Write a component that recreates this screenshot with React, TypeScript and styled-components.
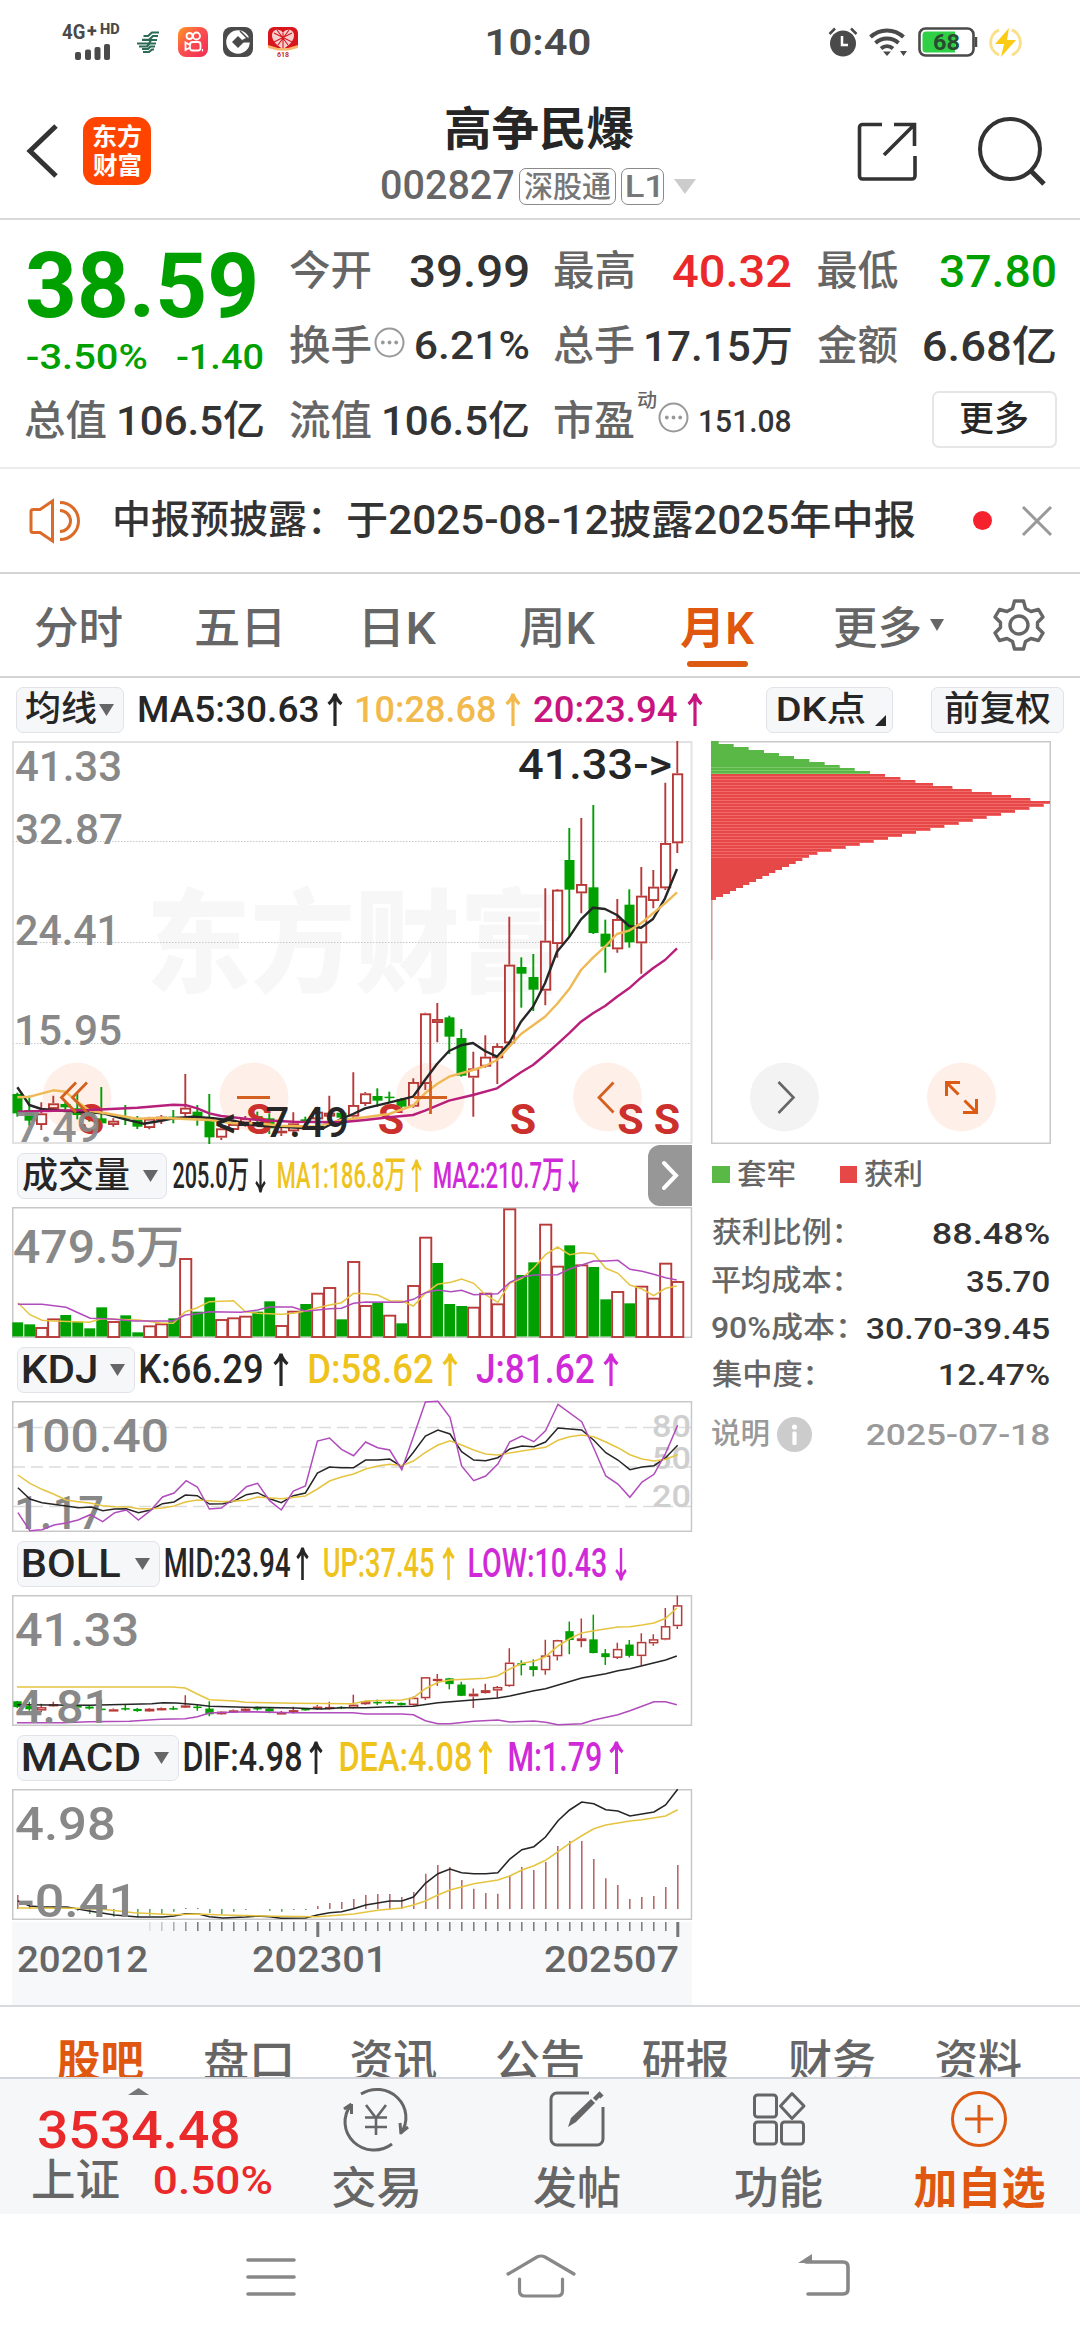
import React, { useLayoutEffect, useRef, useState } from 'react';
import styled, { createGlobalStyle } from 'styled-components';

const FONT = 'Roboto, "Noto Sans CJK SC", sans-serif';

const Global = createGlobalStyle`
  * { box-sizing: border-box; }
  body { margin: 0; background: #fff; font-family: ${FONT}; font-weight: 500; color: #333; }
  svg { display: block; flex: none; overflow: visible; }
`;

/* ---------- text fitted to the width of its slot ---------- */
const Slot = styled.span<{ $w: number; $s: number; $c?: string; $b?: number; $ml?: number }>`
  display: block;
  flex: none;
  width: ${p => p.$w}px;
  margin-left: ${p => p.$ml ?? 0}px;
  font-size: ${p => p.$s}px;
  line-height: ${p => Math.round(p.$s * 1.1)}px;
  height: ${p => Math.round(p.$s * 1.1)}px;
  font-weight: ${p => p.$b ?? 500};
  color: ${p => p.$c ?? 'inherit'};
  white-space: nowrap;
`;
const Ink = styled.span`
  display: inline-block;
  transform-origin: 0 50%;
`;

type FitProps = { w: number; s: number; c?: string; b?: number; ml?: number; children: string };
function Fit({ w, s, c, b, ml, children }: FitProps) {
  const ref = useRef<HTMLSpanElement>(null);
  const [fit, setFit] = useState('none');
  useLayoutEffect(() => {
    const el = ref.current;
    const ctx = document.createElement('canvas').getContext('2d');
    if (!el || !ctx) return;
    ctx.font = `${b ?? 500} ${s}px ${FONT}`;
    const m = ctx.measureText(children);
    const ink = m.actualBoundingBoxLeft + m.actualBoundingBoxRight;
    const k = w / ink;
    setFit(`translateX(${(m.actualBoundingBoxLeft * k).toFixed(2)}px) scaleX(${k.toFixed(4)})`);
  }, [w, s, b, children]);
  return (
    <Slot $w={w} $s={s} $c={c} $b={b} $ml={ml}>
      <Ink ref={ref} style={{ transform: fit }}>{children}</Ink>
    </Slot>
  );
}

/* ---------- layout ---------- */
const Screen = styled.div`
  width: 1080px;
  height: 2340px;
  display: flex;
  flex-direction: column;
  background: #fff;
  overflow: hidden;
`;
const StatusBar = styled.div`
  height: 84px;
  display: flex;
  align-items: center;
  padding-left: 62px;
`;
const Signal = styled.div`
  width: 60px;
  display: flex;
  flex-direction: column;
  gap: 0;
  margin-top: -3px;
`;
const NetLabel = styled.div`
  display: flex;
  align-items: flex-start;
`;
const StatusIcon = styled.div<{ $ml: number }>`
  flex: none;
  margin-left: ${p => p.$ml}px;
`;
const Header = styled.header`
  height: 136px;
  display: flex;
  align-items: center;
  border-bottom: 2px solid #d9d9d9;
  padding-left: 25px;
`;
const AppBadge = styled.div`
  flex: none;
  width: 68px;
  height: 68px;
  margin-left: 24px;
  border-radius: 14px;
  background: #ff4400;
  display: flex;
  flex-direction: column;
  align-items: center;
  justify-content: center;
  gap: 3px;
`;
const TitleBlock = styled.div`
  width: 316px;
  height: 134px;
  margin-left: 231px;
  display: flex;
  flex-direction: column;
  align-items: center;
`;
const TitleLine = styled.div`
  height: 72px;
  padding-top: 20px;
`;
const CodeLine = styled.div`
  height: 60px;
  width: 100%;
  display: flex;
  align-items: center;
`;
const Tag = styled.span<{ $w: number; $ml: number }>`
  flex: none;
  width: ${p => p.$w}px;
  height: 37px;
  margin-left: ${p => p.$ml}px;
  border: 1.5px solid #8a8a8a;
  border-radius: 7px;
  display: flex;
  align-items: center;
  justify-content: center;
`;
const Quote = styled.section`
  height: 249px;
  padding: 14px 26px 0 25px;
  border-bottom: 2px solid #ececec;
  display: grid;
  grid-template-columns: 238px 238px 237px 237px;
  grid-template-rows: 75px 75px 75px;
  column-gap: 26.5px;
`;
const PriceBlock = styled.div`
  grid-row: span 2;
  padding-left: 2px;
`;
const PriceRow = styled.div`
  height: 100px;
  padding-top: 4px;
  display: flex;
  align-items: center;
`;
const ChangeRow = styled.div`
  height: 46px;
  display: flex;
  align-items: center;
`;
const Cell = styled.div`
  display: flex;
  align-items: center;
  justify-content: space-between;
`;
const CellLabel = styled.span`
  display: flex;
  align-items: center;
  color: #666;
`;
const Sup = styled.span`
  align-self: flex-start;
  margin: -9px 0 0 3px;
`;
const MoreButton = styled.button`
  width: 125px;
  height: 57px;
  margin: -5px -2px 0 auto;
  background: #fff;
  border: 2px solid #e6e6e6;
  border-radius: 7px;
  display: flex;
  align-items: center;
  justify-content: center;
  font: inherit;
  padding: 0;
`;
const Notice = styled.section`
  height: 105px;
  display: flex;
  align-items: center;
  padding-left: 29px;
  border-bottom: 2px solid #d4d4d4;
`;
const RedDot = styled.i`
  width: 19px;
  height: 19px;
  margin-left: 58px;
  border-radius: 50%;
  background: #f5222d;
`;
const PeriodTabs = styled.nav`
  height: 104px;
  display: flex;
  align-items: center;
  border-bottom: 2px solid #d4d4d4;
  padding-left: 35px;
  color: #666;
`;
const Period = styled.div<{ $ml?: number; $on?: boolean }>`
  height: 100%;
  margin-left: ${p => p.$ml ?? 0}px;
  display: flex;
  flex-direction: column;
  align-items: center;
  padding-top: 31px;
  color: ${p => (p.$on ? '#e0570f' : '#666')};
`;
const Underline = styled.i`
  width: 61px;
  height: 6px;
  margin-top: 8px;
  border-radius: 3px;
  background: #dc5a12;
`;
const LegendRow = styled.div<{ $h: number; $pl: number }>`
  height: ${p => p.$h}px;
  display: flex;
  align-items: center;
  padding-left: ${p => p.$pl}px;
  color: #262626;
`;
const Chip = styled.div<{ $w: number; $ml?: number; $pl?: number }>`
  flex: none;
  width: ${p => p.$w}px;
  height: 46px;
  margin-left: ${p => p.$ml ?? 0}px;
  padding-left: ${p => p.$pl ?? 5}px;
  background: #f6f7f9;
  border: 1.5px solid #e1e3e8;
  border-radius: 7px;
  display: flex;
  align-items: center;
`;
const Value = styled.div<{ $ml: number; $c?: string }>`
  display: flex;
  align-items: center;
  margin-left: ${p => p.$ml}px;
  color: ${p => p.$c ?? '#262626'};
`;
const Body = styled.main`
  height: 1264px;
  display: flex;
  padding-left: 12px;
`;
const Charts = styled.div`
  width: 680px;
`;
const Expand = styled.div`
  width: 44px;
  height: 61px;
  margin-left: auto;
  border-radius: 12px 0 0 12px;
  background: #979797;
  display: flex;
  align-items: center;
  justify-content: center;
`;
const Axis = styled.div`
  height: 83px;
  margin-top: 2px;
  background: #f7f8fa;
  color: #666;
`;
const AxisLabels = styled.div`
  display: flex;
  align-items: center;
  height: 36px;
  margin-top: 4px;
  padding-left: 6px;
`;
const ChipPanel = styled.aside`
  width: 340px;
  margin-left: 19px;
`;
const PanelRow = styled.div<{ $h: number; $c?: string }>`
  height: ${p => p.$h}px;
  display: flex;
  align-items: center;
  padding-left: 1px;
  color: ${p => p.$c ?? '#666'};
`;
const Right = styled.div`
  margin-left: auto;
  padding-right: 2px;
`;
const Swatch = styled.i<{ $c: string; $ml?: number }>`
  width: 17.5px;
  height: 17.5px;
  margin-left: ${p => p.$ml ?? 0}px;
  background: ${p => p.$c};
`;
const SectionTabs = styled.nav`
  height: 72px;
  border-top: 2px solid #d9dade;
  display: flex;
  padding: 31px 0 0 58px;
  gap: 60.2px;
  overflow: hidden;
`;
const BottomBar = styled.footer`
  height: 137px;
  border-top: 2px solid #d3d5dc;
  background: #f6f7f9;
  display: flex;
`;
const IndexBlock = styled.div`
  flex: none;
  width: 300px;
  display: flex;
  flex-direction: column;
  padding-left: 33px;
`;
const IndexMark = styled.div`
  height: 26px;
  padding: 9px 0 0 95px;
`;
const IndexLine = styled.div<{ $h: number; $pl?: number }>`
  height: ${p => p.$h}px;
  padding-left: ${p => p.$pl ?? 0}px;
  display: flex;
  align-items: center;
`;
const Action = styled.div<{ $w: number; $pl?: number }>`
  flex: none;
  width: ${p => p.$w}px;
  padding-left: ${p => p.$pl ?? 0}px;
  display: flex;
  flex-direction: column;
  align-items: center;
`;
const ActionIcon = styled.div`
  flex: none;
  height: 80px;
  display: flex;
  align-items: center;
`;
const ActionLabel = styled.div`
  flex: none;
  height: 48px;
  margin-top: 6px;
  display: flex;
  align-items: center;
`;
const SystemNav = styled.div`
  height: 126px;
  display: flex;
  align-items: flex-start;
  padding: 40px 0 0 246px;
`;

/* ---------- small drawings ---------- */
const Down = ({ w = 15, h = 12, ml = 0, c = '#666' }: { w?: number; h?: number; ml?: number; c?: string }) => (
  <svg width={w} height={h} style={{ marginLeft: ml }} viewBox="0 0 10 10" preserveAspectRatio="none">
    <path d="M0 0H10L5 10Z" fill={c} />
  </svg>
);
const Arrow = ({ down, w = 16, ml = 8 }: { down?: boolean; w?: number; ml?: number }) => (
  <svg width={w} height="34" viewBox="0 0 16 34" preserveAspectRatio="none" style={{ marginLeft: ml }}>
    <path
      d={down ? 'M8 1V32M1.5 23C5 26 7 29 8 33C9 29 11 26 14.5 23' : 'M8 33V2M1.5 11C5 8 7 5 8 1C9 5 11 8 14.5 11'}
      fill="none" stroke="currentColor" strokeWidth="3.2" />
  </svg>
);
const Raised = styled.svg`
  margin-top: -8px;
`;
const Dots = ({ ml = 0 }: { ml?: number }) => (
  <Raised width="31" height="31" viewBox="0 0 31 31" style={{ marginLeft: ml }}>
    <circle cx="15.5" cy="15.5" r="14" fill="none" stroke="#999" strokeWidth="2" />
    <g fill="#999"><circle cx="8.8" cy="15.5" r="1.9" /><circle cx="15.5" cy="15.5" r="1.9" /><circle cx="22.2" cy="15.5" r="1.9" /></g>
  </Raised>
);

/* ---------- chart data ---------- */
type P = [number, number];
const parse = (s: string): P[] => s.trim().split(/\s+/).map(t => t.split(',').map(Number) as P);
const poly = (pts: P[], kx: number, dx: number, dy: number) =>
  pts.map(([x, y]) => `${(x / kx + dx).toFixed(1)},${(y / 3 + dy).toFixed(1)}`).join(' ');

/* up flag, body top, body bottom, high, low */
const CANDLES: number[][] = [
  [0, 1092, 1150, 1088, 1160], [0, 1140, 1172, 1097, 1187], [1, 1150, 1185, 1117, 1200], [1, 1120, 1137, 1097, 1145],
  [0, 1122, 1132, 1115, 1145], [0, 1135, 1155, 1090, 1168], [0, 1145, 1165, 1130, 1175], [0, 1165, 1180, 1071, 1190],
  [1, 1172, 1185, 1165, 1190], [0, 1160, 1166, 1125, 1185], [0, 1168, 1190, 1158, 1197], [1, 1166, 1194, 1160, 1198],
  [1, 1160, 1170, 1155, 1182], [0, 1160, 1166, 1140, 1180], [1, 1133, 1152, 1032, 1158], [0, 1145, 1160, 1125, 1187],
  [0, 1165, 1222, 1092, 1242], [1, 1195, 1223, 1190, 1230], [1, 1182, 1200, 1175, 1206], [1, 1165, 1180, 1158, 1190],
  [0, 1158, 1170, 1145, 1185], [0, 1165, 1195, 1150, 1212], [1, 1202, 1210, 1190, 1218], [1, 1180, 1204, 1147, 1215],
  [0, 1168, 1178, 1160, 1185], [1, 1145, 1168, 1130, 1180], [1, 1148, 1160, 1097, 1175], [0, 1148, 1163, 1140, 1170],
  [1, 1125, 1160, 1027, 1164], [1, 1090, 1122, 1086, 1128], [0, 1098, 1112, 1075, 1130], [0, 1100, 1104, 1085, 1116],
  [0, 1108, 1130, 1104, 1134], [1, 1056, 1130, 1045, 1133], [1, 850, 1062, 848, 1080], [1, 867, 879, 819, 937],
  [0, 862, 920, 857, 972], [0, 924, 1037, 897, 1040], [1, 1015, 1043, 965, 1160], [1, 980, 1010, 916, 1013],
  [1, 948, 985, 940, 1062], [1, 704, 940, 560, 946], [0, 711, 731, 682, 833], [0, 741, 779, 672, 843],
  [1, 632, 782, 475, 826], [1, 479, 642, 477, 683], [0, 390, 479, 294, 620], [1, 462, 490, 264, 550],
  [0, 472, 609, 225, 612], [0, 611, 650, 569, 728], [1, 567, 658, 507, 668], [0, 524, 637, 478, 653],
  [1, 497, 640, 411, 731], [1, 470, 513, 420, 535], [1, 339, 475, 158, 480], [1, 130, 340, 33, 369],
];
const cx = (i: number) => 5.3 + 12 * i;

const MA5 = '52,1072 66,1092 88,1125 124,1137 196,1143 268,1147 310,1150 376,1168 430,1181 484,1172 520,1165 580,1160 640,1165 700,1172 772,1187 844,1190 920,1195 970,1195 1023,1167 1059,1152 1095,1135 1167,1118 1239,1100 1275,1050 1311,1002 1347,963 1383,946 1419,939 1455,963 1491,980 1527,940 1563,875 1599,830 1635,760 1671,665 1707,622 1743,568 1779,533 1815,537 1851,555 1887,588 1923,593 1959,567 1995,505 2031,417';
const MA10 = '52,1102 90,1100 160,1081 196,1085 232,1115 270,1142 330,1152 412,1166 484,1163 556,1167 628,1170 700,1180 772,1180 844,1187 950,1190 1023,1170 1095,1162 1167,1152 1239,1127 1275,1090 1311,1062 1347,1040 1419,1020 1455,1008 1491,990 1563,912 1635,860 1671,822 1707,778 1743,720 1779,683 1815,650 1851,612 1887,602 1923,580 1959,550 1995,520 2031,487';
const MA20 = '52,1145 160,1142 268,1140 412,1133 484,1127 520,1124 560,1126 592,1135 628,1150 664,1158 772,1170 880,1175 1023,1177 1095,1170 1167,1162 1239,1155 1275,1142 1347,1112 1419,1095 1491,1075 1563,1027 1599,1005 1635,975 1671,943 1707,910 1743,875 1779,850 1815,828 1851,800 1887,775 1923,743 1959,715 1995,690 2031,655';

const VOLUME = 'g547 g553 r561 r535 g525 g545 g565 g502 r543 g526 g577 r556 r550 g535 r354 g515 g472 r537 r532 r527 g515 g484 r555 r512 g492 r458 r441 g538 r363 r495 g489 r524 g550 r435 r290 g369 g492 g498 r500 r458 r490 r205 g405 g367 r251 r377 g316 r373 g381 g478 r453 g490 r437 r473 r368 r423'.split(' ');
const VMA1 = '40,488 67,524 94,541 121,543 200,547 227,536 310,540 360,549 388,550 415,515 442,503 469,485 523,482 550,515 577,520 630,523 657,520 684,513 711,503 738,495 765,488 792,460 819,461 846,465 873,482 900,483 926,498 953,460 980,433 1010,427 1034,417 1061,430 1088,465 1115,487 1142,430 1169,415 1196,383 1222,344 1249,321 1276,344 1303,338 1330,341 1357,385 1384,400 1411,435 1438,447 1464,467 1491,445 1516,438';
const VMA2 = '40,493 94,493 148,502 175,518 202,535 250,537 300,543 388,543 415,525 442,521 469,515 540,517 577,510 604,501 655,501 684,514 738,506 765,505 792,490 819,486 900,487 926,478 953,458 980,450 1010,455 1034,451 1061,464 1115,461 1142,427 1169,411 1196,405 1249,404 1276,387 1303,375 1330,363 1357,363 1384,361 1411,388 1438,394 1464,403 1491,413 1516,420';

const KLINE = '40,443 67,477 94,488 148,498 175,503 205,501 230,512 257,507 283,506 310,518 337,510 364,491 390,486 415,465 442,467 469,492 500,491 525,483 552,464 577,458 604,476 630,488 657,467 684,459 711,399 738,381 765,383 792,383 819,360 846,360 873,357 900,380 926,337 953,288 981,270 1008,282 1034,335 1061,360 1088,362 1115,353 1142,327 1169,318 1196,320 1222,306 1250,264 1303,270 1330,301 1357,338 1384,360 1411,389 1438,381 1465,377 1491,353 1518,316';
const DLINE = '40,405 67,430 94,448 121,463 148,480 175,485 205,490 230,497 257,500 290,501 310,506 337,506 364,504 390,498 415,486 442,480 500,485 552,481 577,471 630,476 684,468 711,447 738,423 765,411 792,402 819,387 846,378 873,373 900,377 926,363 953,337 981,315 1008,302 1034,315 1061,330 1088,342 1115,345 1169,333 1222,322 1250,301 1276,290 1303,285 1330,290 1357,306 1384,323 1411,344 1438,357 1465,363 1491,358 1518,344';
const JLINE = '40,518 67,572 94,569 121,555 148,549 175,540 202,524 230,545 257,518 283,510 310,540 337,512 364,471 390,459 417,422 442,441 469,507 496,504 525,474 552,440 577,430 604,482 630,510 657,453 684,438 711,303 738,294 765,328 792,347 819,306 846,323 873,330 900,389 926,290 953,186 981,184 1008,232 1034,378 1061,422 1088,408 1115,372 1142,305 1169,288 1196,305 1222,272 1250,193 1303,245 1330,325 1357,408 1384,432 1411,472 1438,426 1465,403 1491,340 1518,256';

const UP = '38,1041 385,1041 415,1044 442,1062 469,1079 525,1083 550,1087 660,1090 790,1091 819,1083 900,1080 926,1073 953,1046 981,1027 1008,1020 1088,1015 1115,1007 1142,987 1169,970 1196,964 1222,950 1250,918 1276,896 1303,879 1330,872 1384,861 1411,860 1438,855 1465,849 1491,835 1516,804';
const MID = '38,1094 200,1096 340,1091 365,1088 395,1089 442,1094 470,1099 550,1102 660,1104 720,1107 765,1103 819,1103 870,1100 926,1099 981,1088 1115,1074 1142,1068 1196,1052 1222,1046 1303,1014 1357,1001 1384,992 1411,986 1491,960 1516,948';
const LOW = '38,1148 140,1148 200,1145 290,1144 360,1138 415,1136 442,1130 469,1119 550,1115 660,1118 790,1118 819,1122 900,1122 926,1124 953,1142 981,1151 1008,1151 1061,1144 1115,1140 1142,1146 1196,1143 1222,1147 1250,1154 1303,1151 1330,1140 1384,1124 1411,1112 1465,1085 1491,1085 1516,1094';

const DIF = '40,543 67,558 94,561 150,561 200,573 257,585 310,591 365,591 390,588 415,581 445,582 469,590 500,594 550,591 577,588 604,590 630,595 684,594 711,585 738,578 765,575 792,566 819,555 873,543 900,543 926,531 953,490 981,461 1008,447 1034,458 1061,461 1088,461 1115,458 1142,417 1169,389 1196,380 1222,351 1250,302 1276,270 1303,246 1330,251 1357,269 1384,273 1411,288 1465,276 1491,255 1518,208';
const DEA = '40,564 175,565 230,568 300,578 390,584 440,582 500,585 620,589 711,590 792,582 846,571 900,564 926,555 953,543 981,525 1008,510 1061,491 1115,480 1142,468 1169,450 1196,437 1222,421 1250,395 1276,370 1303,347 1330,326 1357,315 1411,303 1438,299 1491,288 1518,269';
const MACD = [525, 557, 560, 560, 563, 572, 582, 575, 590, 580, 592, 587, 582, 575, 564, 564, 579, 582, 575, 570, 567, 572, 575, 570, 570, 558, 549, 546, 537, 525, 522, 522, 531, 516, 461, 435, 441, 480, 506, 519, 521, 466, 441, 450, 426, 378, 363, 363, 417, 475, 495, 537, 531, 528, 501, 435];

const RED = '#b83a38';
const GREEN = '#00a000';
const YELLOW = '#e6c440';
const PURPLE = '#b04cbc';

/* ---------- charts ---------- */
const Label = ({ x, y, w, s = 42, c = '#888', b = 500, children }: { x: number; y: number; w: number; s?: number; c?: string; b?: number; children: string }) => (
  <text x={x} y={y} textLength={w} lengthAdjust="spacingAndGlyphs" fontSize={s} fill={c} fontWeight={b} fontFamily={FONT}>{children}</text>
);

const Candles = ({ map, half, sw }: { map: (v: number) => number; half: number; sw: number }) => (
  <g>
    {CANDLES.map(([up, a, b, hi, lo], i) => {
      const x = cx(i);
      const top = map(a), bot = Math.max(map(b), map(a) + 1.5);
      return up ? (
        <g key={i} stroke={RED} strokeWidth={sw} fill="none">
          <path d={`M${x} ${map(hi)}V${top}M${x} ${bot}V${map(lo)}`} />
          <rect x={x - half + sw / 2 + 0.3} y={top + sw / 2} width={half * 2 - sw} height={Math.max(bot - top - sw, 0.8)} />
        </g>
      ) : (
        <g key={i} fill={GREEN}>
          <rect x={x - sw / 2} y={map(hi)} width={sw} height={map(lo) - map(hi)} />
          <rect x={x - half + 0.8} y={top} width={half * 2 - 1.2} height={bot - top} />
        </g>
      );
    })}
  </g>
);

const MainChart = () => (
  <svg width="680" height="403" viewBox="0 0 680 403">
    <Label x={134} y={243} w={418} s={112} c="#f7f7f7" b={900}>东方财富</Label>
    {[100.5, 201.5, 302.5].map(y => <path key={y} d={`M1 ${y}H679`} stroke="#c8c8c8" strokeWidth="1" strokeDasharray="1.5 1.5" />)}
    <rect x="1" y="1" width="678.5" height="401" fill="none" stroke="#e2e2e2" strokeWidth="2" />
    {[65, 242, 418.5, 595.5].map(x => <circle key={x} cx={x} cy="356" r="34.5" fill="#fef0e8" />)}
    <Candles map={v => v / 3 - 11} half={5.6} sw={1.9} />
    {[79, 247, 379, 511, 618.5, 655].map(x => (
      <text key={x} x={x} y="393" textAnchor="middle" fontSize="43" fontWeight="700" fontFamily={FONT} fill="#cb302d">S</text>
    ))}
    <g fill="none" strokeWidth="2.4" strokeLinejoin="round">
      <polyline points={poly(parse(MA5), 3, -12, -11)} stroke="#262626" />
      <polyline points={poly(parse(MA10), 3, -12, -11)} stroke="#efb955" />
      <polyline points={poly(parse(MA20), 3, -12, -11)} stroke="#b81f7a" />
    </g>
    <g fill="none" stroke="#d4601f" strokeWidth="2.8">
      <path d="M64 341.5L49.5 356.5L64 371.5M75 341.5L60.5 356.5L75 371.5" />
      <path d="M225 356.5H258" />
      <path d="M402 356.5H435M418.5 340V373" />
      <path d="M601.5 341.5L587 356.5L601.5 371.5" />
    </g>
    <Label x={3} y={40} w={107}>41.33</Label>
    <Label x={3} y={103} w={108}>32.87</Label>
    <Label x={3} y={204} w={105}>24.41</Label>
    <Label x={2} y={304} w={108}>15.95</Label>
    <g opacity=".93"><Label x={4} y={401} w={85}>7.49</Label></g>
    <Label x={203} y={396} w={134} c="#262626">&lt;--7.49</Label>
    <Label x={506} y={38} w={154} c="#262626">41.33-&gt;</Label>
  </svg>
);

const Frame = () => <rect x=".75" y=".75" width="678.7" height="129.5" fill="none" stroke="#c8c8c8" strokeWidth="1.5" />;

const VolumeChart = () => (
  <svg width="680" height="131" viewBox="0 0 680 131">
    <Frame />
    <Label x={1} y={56} w={171} s={46}>479.5万</Label>
    {VOLUME.map((v, i) => {
      const y = Number(v.slice(1)) / 3 - 67;
      return v[0] === 'r'
        ? <rect key={i} x={cx(i) - 5.2} y={y + 1} width="11.2" height={129 - y} fill="#fff" stroke={RED} strokeWidth="1.9" />
        : <rect key={i} x={cx(i) - 5} y={y} width="10.8" height={129.5 - y} fill={GREEN} />;
    })}
    <g fill="none" strokeWidth="1.5">
      <polyline points={poly(parse(VMA1), 2.24, -12, -67)} stroke={YELLOW} />
      <polyline points={poly(parse(VMA2), 2.24, -12, -67)} stroke={PURPLE} />
    </g>
  </svg>
);

const KdjChart = () => (
  <svg width="680" height="131" viewBox="0 0 680 131">
    {[26.5, 66, 105.5].map(y => <path key={y} d={`M1 ${y}H679`} stroke="#dcdcdc" strokeWidth="1.5" strokeDasharray="12 6" />)}
    <Frame />
    <Label x={2} y={51} w={155} s={46}>100.40</Label>
    <Label x={2} y={128} w={90} s={46}>1.17</Label>
    <Label x={640} y={36} w={39} s={32} c="#cfcfcf">80</Label>
    <Label x={640} y={67.5} w={39} s={32} c="#cfcfcf">50</Label>
    <Label x={640} y={106} w={39} s={32} c="#cfcfcf">20</Label>
    <g fill="none" strokeWidth="1.5">
      <polyline points={poly(parse(KLINE), 2.24, -12, -61)} stroke="#262626" />
      <polyline points={poly(parse(DLINE), 2.24, -12, -61)} stroke={YELLOW} />
      <polyline points={poly(parse(JLINE), 2.24, -12, -61)} stroke={PURPLE} />
    </g>
  </svg>
);

const BollChart = () => (
  <svg width="680" height="131" viewBox="0 0 680 131">
    <Frame />
    <Candles map={v => (v / 3 - 11) * 0.2997 + 0.5} half={4.8} sw={1.5} />
    <g fill="none" strokeWidth="1.6">
      <polyline points={poly(parse(MID), 2.24, -12, -255)} stroke="#262626" />
      <polyline points={poly(parse(UP), 2.24, -12, -255)} stroke={YELLOW} />
      <polyline points={poly(parse(LOW), 2.24, -12, -255)} stroke={PURPLE} />
    </g>
    <Label x={3} y={51} w={124} s={46}>41.33</Label>
    <Label x={3} y={128} w={96} s={46}>4.81</Label>
  </svg>
);

const MacdChart = () => (
  <svg width="680" height="131" viewBox="0 0 680 131">
    <Frame />
    {MACD.map((v, i) => (
      <path key={i} d={`M${cx(i) + 0.5} ${120}V${v / 3 - 69}`} stroke={v < 567 ? '#b5605e' : '#4aa84a'} strokeWidth="1.5" />
    ))}
    <g fill="none" strokeWidth="1.6">
      <polyline points={poly(parse(DIF), 2.24, -12, -69)} stroke="#262626" />
      <polyline points={poly(parse(DEA), 2.24, -12, -69)} stroke={YELLOW} />
    </g>
    <Label x={3} y={51} w={101} s={46}>4.98</Label>
    <Label x={5} y={128} w={121} s={46}>-0.41</Label>
  </svg>
);

const Ticks = () => (
  <svg width="680" height="15" viewBox="0 0 680 15">
    {CANDLES.map((_, i) => {
      const big = i === 25 || i === 55;
      if (i < 11) return null;
      return <path key={i} d={`M${cx(i) + 0.5} 0V${big ? 15 : 9}`} stroke="#777" strokeWidth={big ? 3 : 1.5} opacity={Math.min(1, (i - 10) / 5)} />;
    })}
  </svg>
);

const COST = [86, 131, 176, 222, 267, 312, 358, 404, 449, 494, 540, 585, 631, 676, 729, 787, 845, 905, 963, 1021, 1080, 1061, 1018, 975, 933, 890, 848, 806, 763, 721, 678, 636, 594, 551, 509, 467, 424, 382, 357, 337, 317, 297, 276, 256, 237, 217, 198, 178, 159, 138, 120, 99, 78];
const CostChart = () => (
  <svg width="340" height="403" viewBox="0 0 340 403">
    <rect x=".75" y=".75" width="338.5" height="401.5" fill="none" stroke="#c9c9c9" strokeWidth="1.5" />
    {COST.map((v, n) => {
      const w = (v - 63) / 3;
      const green = n < 11;
      return (
        <g key={n} transform={`translate(0 ${n * 3})`}>
          <rect width={w} height="3" fill={green ? '#5ab946' : '#e64747'} />
          {n > 7 && n < 39 && <rect y="2" width={w} height="1" fill={green ? '#7cc96b' : '#f26a6a'} />}
        </g>
      );
    })}
    <rect y="159" width="1.5" height="60" fill="#e64747" opacity=".35" />
    <circle cx="73.5" cy="356" r="34.5" fill="#f3f3f3" />
    <path d="M67.5 341L82.5 356.5L67.5 372" fill="none" stroke="#666" strokeWidth="2.6" />
    <circle cx="250.5" cy="356" r="34.5" fill="#fef0e8" />
    <path d="M235.5 355V341.5H249M236 342L247.5 353.5M265.5 358V371.5H252M265 371L253.5 359.5" fill="none" stroke="#dc5a12" strokeWidth="3" />
  </svg>
);

/* ---------- screen ---------- */
const Y = '#efc31d';
const M = '#d02ad8';

export default function App() {
  return (
    <>
      <Global />
      <Screen>
        <StatusBar>
          <Signal>
            <NetLabel>
              <Fit w={23} s={21} b={700} c="#4a4a4a">4G</Fit>
              <Fit w={10} s={18} b={800} c="#4a4a4a" ml={2}>+</Fit>
              <Fit w={20} s={15} b={800} c="#4a4a4a" ml={3}>HD</Fit>
            </NetLabel>
            <svg width="60" height="16" viewBox="0 0 60 16" fill="#4a4a4a">
              <rect x="13" y="8" width="6" height="8" rx="2" /><rect x="23" y="5.5" width="6" height="10.5" rx="2" />
              <rect x="32.5" y="3" width="6" height="13" rx="2" /><rect x="42" y="0" width="6" height="16" rx="2" />
            </svg>
          </Signal>
          <StatusIcon $ml={15}>
            <svg width="22" height="22" viewBox="0 0 22 22" fill="none" stroke="#2b6b55" strokeWidth="2.2">
              <path d="M22 1.5H15L11 5H6.5M21 5H16L12 8.8H5M20 9H14L12 12.5H0M2 15.5H10L12.5 12.5H19M5 18H11L13.5 15.5H18M6 21H12L15 18.5H17" />
            </svg>
          </StatusIcon>
          <StatusIcon $ml={19}>
            <svg width="30" height="30" viewBox="0 0 30 30">
              <defs><linearGradient id="ks" x1="0" y1="0" x2="1" y2="1"><stop offset="0" stopColor="#ff9a1f" /><stop offset=".45" stopColor="#fb5050" /><stop offset="1" stopColor="#f02a55" /></linearGradient></defs>
              <rect width="30" height="30" rx="8" fill="url(#ks)" />
              <g fill="none" stroke="#fff" strokeWidth="1.8"><circle cx="11.5" cy="9" r="3" /><circle cx="18.5" cy="9" r="3.5" /><rect x="12" y="15" width="10.5" height="8.5" rx="2.5" /><path d="M12 18L7.5 15.5V23L12 20.5" /></g>
              <path d="M24.5 22V24.5" stroke="#fff" strokeWidth="1.2" />
            </svg>
          </StatusIcon>
          <StatusIcon $ml={15}>
            <svg width="30" height="30" viewBox="0 0 30 30">
              <rect width="30" height="30" rx="8" fill="#4a4a4a" />
              <circle cx="15" cy="15" r="11.8" fill="#fff" />
              <path d="M15 9L21 15L15 21L9 15Z" fill="#4a4a4a" />
              <path d="M19 13L24 10.5H29V15.5H20Z" fill="#4a4a4a" />
              <path d="M17 4L24 11" stroke="#4a4a4a" strokeWidth="1.5" />
            </svg>
          </StatusIcon>
          <StatusIcon $ml={15}>
            <svg width="30" height="30" viewBox="0 0 30 30">
              <path d="M6 0H24A6 6 0 0 1 30 6V19L24 22H6L0 19V6A6 6 0 0 1 6 0Z" fill="#d8141c" />
              <path d="M15 22C8 18 4 13 4 8.5C4 2 12 1 15 6C18 1 26 2 26 8.5C26 13 22 18 15 22Z" fill="#f6cfcf" />
              <path d="M6 6L24 15M24 6L6 15M15 6V21M9 3L20 18M21 3L10 18" stroke="#d8141c" strokeWidth="1.1" />
              <path d="M0 18L10 21H20L30 18V21L20 23.5H10L0 21Z" fill="#f8b46a" />
              <text x="15" y="29.5" fontSize="7" fontWeight="700" textAnchor="middle" fontFamily={FONT} fill="#c43030">618</text>
            </svg>
          </StatusIcon>
          <Fit w={102} s={37} b={600} c="#4a4a4a" ml={190}>10:40</Fit>
          <StatusIcon $ml={238}>
            <svg width="30" height="30" viewBox="0 0 30 30">
              <circle cx="15" cy="16.5" r="13" fill="#4a4a4a" />
              <path d="M1.5 7L7 1.5M28.5 7L23 1.5" stroke="#4a4a4a" strokeWidth="2.5" />
              <path d="M14 9V18H20" stroke="#fff" strokeWidth="2.5" fill="none" />
            </svg>
          </StatusIcon>
          <StatusIcon $ml={11}>
            <svg width="40" height="28" viewBox="0 0 40 28" fill="none" stroke="#4a4a4a" strokeWidth="4">
              <path d="M1.5 9A24 24 0 0 1 34.5 9M6.5 15A17 17 0 0 1 29.5 15M12 20.5A9.5 9.5 0 0 1 24 20.5" />
              <path d="M14 23.5H22L18 28ZM31 23H38L34.5 28Z" fill="#4a4a4a" stroke="none" />
            </svg>
          </StatusIcon>
          <StatusIcon $ml={9}>
            <svg width="60" height="30" viewBox="0 0 60 30">
              <rect x="1.5" y="1.5" width="54" height="27" rx="6" fill="#fff" stroke="#4a4a4a" strokeWidth="2.6" />
              <path d="M8 4.5H37V25.5H8A3.5 3.5 0 0 1 4.5 22V8A3.5 3.5 0 0 1 8 4.5Z" fill="#2fd046" />
              <path d="M58 10V20" stroke="#4a4a4a" strokeWidth="2.5" />
              <text x="15" y="23" fontSize="22" fontWeight="700" textLength="27" lengthAdjust="spacingAndGlyphs" fontFamily={FONT} fill="#2c4a30">68</text>
            </svg>
          </StatusIcon>
          <StatusIcon $ml={12}>
            <svg width="31" height="31" viewBox="0 0 31 31">
              <path d="M9 3A13.5 13.5 0 0 0 9 28M22 3A13.5 13.5 0 0 1 22 28" fill="none" stroke="#fbe08c" strokeWidth="3" />
              <path d="M19 1L5 17H14L11 30L26 13H17Z" fill="#fccb15" />
            </svg>
          </StatusIcon>
        </StatusBar>

        <Header>
          <svg width="34" height="56" viewBox="0 0 34 56"><path d="M31 3L5 28L31 53" fill="none" stroke="#333" strokeWidth="5" /></svg>
          <AppBadge>
            <Fit w={48} s={24} b={700} c="#fff">东方</Fit>
            <Fit w={48} s={24} b={700} c="#fff">财富</Fit>
          </AppBadge>
          <TitleBlock>
            <TitleLine><Fit w={188} s={46} b={600} c="#262626">高争民爆</Fit></TitleLine>
            <CodeLine>
              <Fit w={132} s={40} c="#666">002827</Fit>
              <Tag $w={97} $ml={5}><Fit w={87} s={30} c="#777">深股通</Fit></Tag>
              <Tag $w={43} $ml={5}><Fit w={31} s={32} c="#777">L1</Fit></Tag>
              <Down w={22} h={15} ml={10} c="#ccc" />
            </CodeLine>
          </TitleBlock>
          <svg width="60" height="60" viewBox="0 0 60 60" style={{ marginLeft: 159 }} fill="none" stroke="#333" strokeWidth="3.6">
            <path d="M25 3.5H5.5A3 3 0 0 0 2.5 6.5V55A3 3 0 0 0 5.5 58H55A3 3 0 0 0 58 55V35M37 3.5H57.5V25M57 4L27 34" />
          </svg>
          <svg width="70" height="70" viewBox="0 0 70 70" style={{ marginLeft: 61 }} fill="none" stroke="#333" strokeWidth="4">
            <circle cx="32" cy="33" r="30" /><path d="M53 55L66 68" strokeWidth="5" />
          </svg>
        </Header>

        <Quote>
          <PriceBlock>
            <PriceRow><Fit w={228} s={91} b={700} c={GREEN}>38.59</Fit></PriceRow>
            <ChangeRow>
              <Fit w={120} s={35} c={GREEN}>-3.50%</Fit>
              <Fit w={86} s={35} c={GREEN} ml={30}>-1.40</Fit>
            </ChangeRow>
          </PriceBlock>
          <Cell><CellLabel><Fit w={81} s={41}>今开</Fit></CellLabel><Fit w={118} s={44}>39.99</Fit></Cell>
          <Cell><CellLabel><Fit w={80} s={41}>最高</Fit></CellLabel><Fit w={118} s={44} c="#ea2a2a">40.32</Fit></Cell>
          <Cell><CellLabel><Fit w={80} s={41}>最低</Fit></CellLabel><Fit w={115} s={44} c={GREEN}>37.80</Fit></Cell>
          <Cell><CellLabel><Fit w={81} s={41}>换手</Fit><Dots ml={3} /></CellLabel><Fit w={112} s={39}>6.21%</Fit></Cell>
          <Cell><CellLabel><Fit w={80} s={41}>总手</Fit></CellLabel><Fit w={145} s={42}>17.15万</Fit></Cell>
          <Cell><CellLabel><Fit w={80} s={41}>金额</Fit></CellLabel><Fit w={131} s={42}>6.68亿</Fit></Cell>
          <Cell><CellLabel><Fit w={81} s={41}>总值</Fit></CellLabel><Fit w={144} s={41}>106.5亿</Fit></Cell>
          <Cell><CellLabel><Fit w={81} s={41}>流值</Fit></CellLabel><Fit w={144} s={41}>106.5亿</Fit></Cell>
          <Cell><CellLabel><Fit w={80} s={41}>市盈</Fit><Sup><Fit w={19} s={19}>动</Fit></Sup><Dots ml={2} /></CellLabel><Fit w={91} s={31}>151.08</Fit></Cell>
          <Cell><MoreButton><Fit w={68} s={35} c="#262626">更多</Fit></MoreButton></Cell>
        </Quote>

        <Notice>
          <svg width="52" height="44" viewBox="0 0 52 44" fill="none" stroke="#dc6a28" strokeWidth="3">
            <path d="M2 12.5Q2 10.5 4 10.5H11L23.5 2V42L11 33.5H4Q2 33.5 2 31.5Z" /><path d="M31 11.5A10.5 10.5 0 0 1 31 32.5M31 3.5A18.5 18.5 0 0 1 31 40.5" />
          </svg>
          <Fit w={206} s={39} ml={34}>中报预披露：</Fit>
          <Fit w={567} s={40} ml={27}>于2025-08-12披露2025年中报</Fit>
          <RedDot />
          <svg width="30" height="30" viewBox="0 0 30 30" style={{ marginLeft: 30 }}><path d="M1 1L29 29M29 1L1 29" stroke="#999" strokeWidth="3" /></svg>
        </Notice>

        <PeriodTabs>
          <Period><Fit w={87} s={44}>分时</Fit></Period>
          <Period $ml={74}><Fit w={83} s={44}>五日</Fit></Period>
          <Period $ml={86}><Fit w={71} s={44}>日K</Fit></Period>
          <Period $ml={84}><Fit w={75} s={44}>周K</Fit></Period>
          <Period $ml={85} $on><Fit w={75} s={44} b={600}>月K</Fit><Underline /></Period>
          <Period $ml={79}><Fit w={86} s={44}>更多</Fit></Period>
          <Down ml={10} w={14} h={12} />
          <svg width="52" height="52" viewBox="0 0 52 52" style={{ marginLeft: 49 }} fill="none" stroke="#666" strokeWidth="3.4" strokeLinejoin="round">
            <path d="M21.5 2H30.5L32.5 9.5L38 12.5L45.5 10.5L50 18L44.5 23.5V28.5L50 34L45.5 41.5L38 39.5L32.5 42.5L30.5 50H21.5L19.5 42.5L14 39.5L6.5 41.5L2 34L7.5 28.5V23.5L2 18L6.5 10.5L14 12.5L19.5 9.5Z" />
            <circle cx="26" cy="26" r="9" />
          </svg>
        </PeriodTabs>

        <LegendRow $h={63} $pl={16}>
          <Chip $w={108} $pl={9}><Fit w={70} s={35}>均线</Fit><Down ml={3} /></Chip>
          <Value $ml={15}><Fit w={179} s={36}>MA5:30.63</Fit><Arrow ml={9} /></Value>
          <Value $ml={13} $c="#f2b94c"><Fit w={139} s={36}>10:28.68</Fit><Arrow ml={10} /></Value>
          <Value $ml={13} $c="#c8147e"><Fit w={143} s={36}>20:23.94</Fit><Arrow ml={10} /></Value>
          <Chip $w={127} $ml={63} $pl={11}>
            <Fit w={87} s={34}>DK点</Fit>
            <svg width="11" height="11" viewBox="0 0 11 11" style={{ margin: '22px 0 0 10px' }}><path d="M11 0V11H0Z" fill="#262626" /></svg>
          </Chip>
          <Chip $w={133} $ml={38} $pl={13}><Fit w={105} s={35}>前复权</Fit></Chip>
        </LegendRow>

        <Body>
          <Charts>
            <MainChart />
            <LegendRow $h={63} $pl={5}>
              <Chip $w={150}><Fit w={106} s={36}>成交量</Fit><Down ml={14} /></Chip>
              <Value $ml={6}><Fit w={75} s={37}>205.0万</Fit><Arrow down w={11} ml={7} /></Value>
              <Value $ml={12} $c={Y}><Fit w={127} s={37}>MA1:186.8万</Fit><Arrow w={11} ml={6} /></Value>
              <Value $ml={12} $c={M}><Fit w={129} s={37}>MA2:210.7万</Fit><Arrow down w={11} ml={5} /></Value>
              <Expand><svg width="18" height="29" viewBox="0 0 18 29"><path d="M3 2L15 14.5L3 27" fill="none" stroke="#fff" strokeWidth="4" strokeLinecap="round" /></svg></Expand>
            </LegendRow>
            <VolumeChart />
            <LegendRow $h={63} $pl={5}>
              <Chip $w={118}><Fit w={73} s={38}>KDJ</Fit><Down ml={14} /></Chip>
              <Value $ml={5}><Fit w={122} s={40}>K:66.29</Fit><Arrow ml={11} /></Value>
              <Value $ml={20} $c={Y}><Fit w={124} s={40}>D:58.62</Fit><Arrow ml={9} /></Value>
              <Value $ml={18} $c={M}><Fit w={118} s={40}>J:81.62</Fit><Arrow ml={9} /></Value>
            </LegendRow>
            <KdjChart />
            <LegendRow $h={63} $pl={5}>
              <Chip $w={143}><Fit w={97} s={38}>BOLL</Fit><Down ml={15} /></Chip>
              <Value $ml={5}><Fit w={125} s={40}>MID:23.94</Fit><Arrow w={13} ml={6} /></Value>
              <Value $ml={15} $c={Y}><Fit w={110} s={40}>UP:37.45</Fit><Arrow w={13} ml={8} /></Value>
              <Value $ml={14} $c={M}><Fit w={137} s={40}>LOW:10.43</Fit><Arrow down w={12} ml={9} /></Value>
            </LegendRow>
            <BollChart />
            <LegendRow $h={63} $pl={5}>
              <Chip $w={162}><Fit w={116} s={38}>MACD</Fit><Down ml={15} /></Chip>
              <Value $ml={5}><Fit w={117} s={40}>DIF:4.98</Fit><Arrow w={14} ml={8} /></Value>
              <Value $ml={17} $c={Y}><Fit w={131} s={40}>DEA:4.08</Fit><Arrow w={15} ml={7} /></Value>
              <Value $ml={16} $c={M}><Fit w={92} s={40}>M:1.79</Fit><Arrow w={15} ml={8} /></Value>
            </LegendRow>
            <MacdChart />
            <Axis>
              <Ticks />
              <AxisLabels>
                <Fit w={129} s={37}>202012</Fit>
                <Fit w={127} s={37} ml={106}>202301</Fit>
                <Fit w={133} s={37} ml={165}>202507</Fit>
              </AxisLabels>
            </Axis>
          </Charts>
          <ChipPanel>
            <CostChart />
            <PanelRow $h={61}>
              <Swatch $c="#5ab946" /><Fit w={58} s={29} ml={7}>套牢</Fit>
              <Swatch $c="#e64747" $ml={45} /><Fit w={57} s={29} ml={7}>获利</Fit>
            </PanelRow>
            <PanelRow $h={56}><Fit w={130} s={29}>获利比例：</Fit><Right><Fit w={116} s={30} c="#333">88.48%</Fit></Right></PanelRow>
            <PanelRow $h={40}><Fit w={130} s={29}>平均成本：</Fit><Right><Fit w={82} s={30} c="#333">35.70</Fit></Right></PanelRow>
            <PanelRow $h={54}><Fit w={134} s={29}>90%成本：</Fit><Right><Fit w={182} s={30} c="#333">30.70-39.45</Fit></Right></PanelRow>
            <PanelRow $h={39}><Fit w={101} s={29}>集中度：</Fit><Right><Fit w={109} s={30} c="#333">12.47%</Fit></Right></PanelRow>
            <PanelRow $h={80} $c="#999">
              <Fit w={57} s={29}>说明</Fit>
              <svg width="35" height="35" viewBox="0 0 35 35" style={{ marginLeft: 8 }}>
                <circle cx="17.5" cy="17.5" r="17.5" fill="#ccc" /><circle cx="17.5" cy="10" r="2.6" fill="#fff" /><rect x="15.4" y="14.5" width="4.2" height="13.5" rx="1.5" fill="#fff" />
              </svg>
              <Right><Fit w={182} s={30}>2025-07-18</Fit></Right>
            </PanelRow>
          </ChipPanel>
        </Body>

        <SectionTabs>
          <Fit w={86} s={44} b={700} c="#e0570f">股吧</Fit>
          {['盘口', '资讯', '公告', '研报', '财务', '资料'].map(t => <Fit key={t} w={86} s={44} c="#666">{t}</Fit>)}
        </SectionTabs>

        <BottomBar>
          <IndexBlock>
            <IndexMark><svg width="21" height="7" viewBox="0 0 21 7"><path d="M0 7L10.5 0L21 7Z" fill="#777" /></svg></IndexMark>
            <IndexLine $h={50} $pl={5}><Fit w={200} s={52} c="#ea2a2a">3534.48</Fit></IndexLine>
            <IndexLine $h={52}><Fit w={86} s={44} c="#666">上证</Fit><Fit w={117} s={39} c="#ea2a2a" ml={35}>0.50%</Fit></IndexLine>
          </IndexBlock>
          <Action $w={151}>
            <ActionIcon>
              <svg width="66" height="60" viewBox="0 0 66 60" fill="none" stroke="#666" strokeWidth="3">
                <path d="M18 5A29 28 0 0 1 58 44M49 55A29 28 0 0 1 8 16" />
                <path d="M58 45L57 34M57 44.5L65 38" /><path d="M8.5 15L1 20M8.5 15V25" />
                <path d="M23 16L33 29L43 16M22 28.5H44M22 38H44M33 29V46" strokeWidth="2.6" />
              </svg>
            </ActionIcon>
            <ActionLabel><Fit w={85} s={44} c="#666">交易</Fit></ActionLabel>
          </Action>
          <Action $w={252}>
            <ActionIcon>
              <svg width="56" height="58" viewBox="0 0 56 58" fill="none" stroke="#666" strokeWidth="3">
                <path d="M40 3H8A6 6 0 0 0 2 9V49A6 6 0 0 0 8 55H48A6 6 0 0 0 54 49V17" />
                <path d="M19 37L22 28L42 9L46 13L27 32Z" fill="#666" stroke="none" /><path d="M45.5 9.5L50.5 4.5L53 7" strokeWidth="4.5" />
              </svg>
            </ActionIcon>
            <ActionLabel><Fit w={86} s={44} c="#666">发帖</Fit></ActionLabel>
          </Action>
          <Action $w={151}>
            <ActionIcon>
              <svg width="52" height="54" viewBox="0 0 52 54" fill="none" stroke="#666" strokeWidth="3" strokeLinejoin="round">
                <rect x="1.5" y="3" width="22" height="22" rx="3" /><rect x="1.5" y="30" width="22" height="22" rx="3" /><rect x="28.5" y="30" width="22" height="22" rx="3" /><path d="M39 1.5L51 14L39 26.5L27.5 14Z" />
              </svg>
            </ActionIcon>
            <ActionLabel><Fit w={87} s={44} c="#666">功能</Fit></ActionLabel>
          </Action>
          <Action $w={226} $pl={24}>
            <ActionIcon>
              <svg width="58" height="58" viewBox="0 0 58 58" fill="none" stroke="#dc5a12" strokeWidth="3"><circle cx="29" cy="29" r="26.5" /><path d="M15 29H43M29 15V43" /></svg>
            </ActionIcon>
            <ActionLabel><Fit w={131} s={44} b={700} c="#e0570f">加自选</Fit></ActionLabel>
          </Action>
        </BottomBar>

        <SystemNav>
          <svg width="50" height="44" viewBox="0 0 50 44" stroke="#888" strokeWidth="3.6" strokeLinecap="round"><path d="M2 6H48M2 23H48M2 40H48" /></svg>
          <svg width="70" height="44" viewBox="0 0 70 44" style={{ marginLeft: 210 }} fill="none" stroke="#888" strokeWidth="3.2" strokeLinecap="round">
            <path d="M2 20L31 3Q35 1 39 3L68 20M13.5 25V37Q13.5 42 19 42H51Q56.5 42 56.5 37V25" />
          </svg>
          <svg width="52" height="44" viewBox="0 0 52 44" style={{ marginLeft: 222 }} fill="none" stroke="#888" strokeWidth="3.6" strokeLinecap="round">
            <path d="M8 8H45Q50 8 50 13V35Q50 40 45 40H10" /><path d="M0 9L14 0V9Z" fill="#888" stroke="none" />
          </svg>
        </SystemNav>
      </Screen>
    </>
  );
}
